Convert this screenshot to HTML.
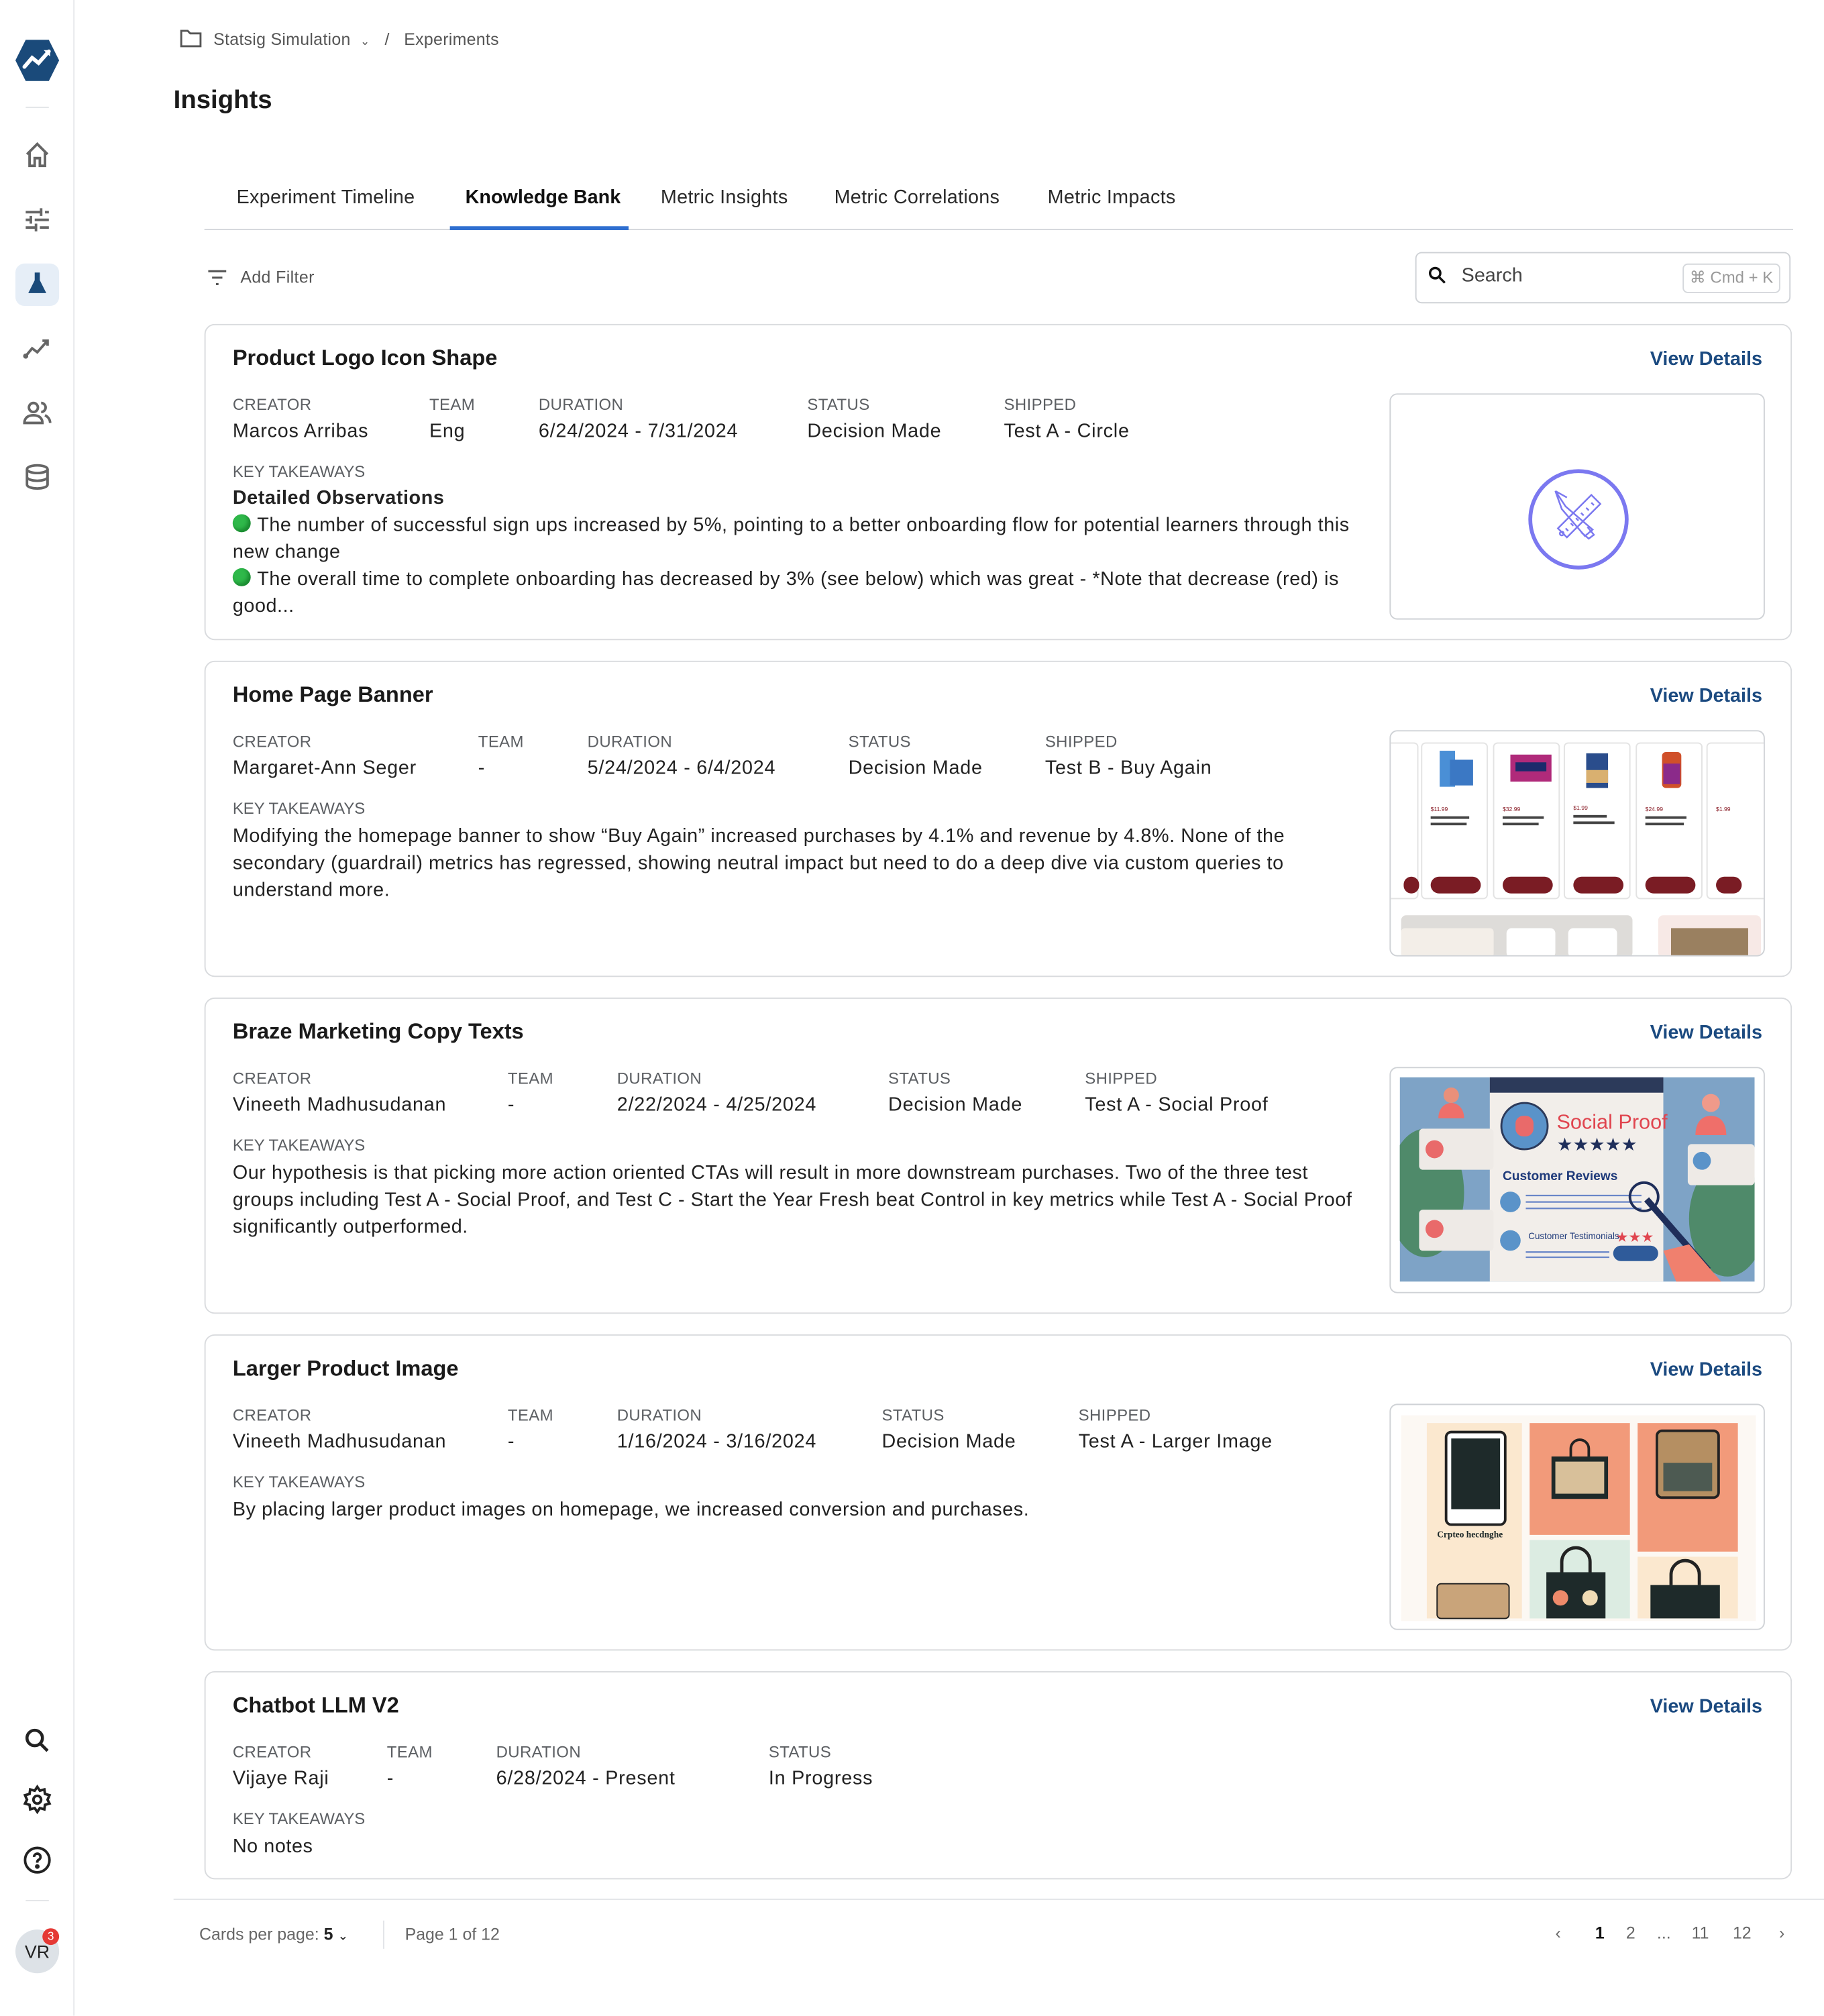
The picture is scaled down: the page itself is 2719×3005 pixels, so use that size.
<!DOCTYPE html>
<html><head><meta charset="utf-8">
<style>
*{box-sizing:border-box;margin:0;padding:0}
html,body{width:2719px;height:3004px;overflow:hidden;background:#fff}
#r{position:absolute;left:0;top:0;width:1419px;height:1568px;transform:scale(1.91614);transform-origin:0 0;font-family:"Liberation Sans",sans-serif;color:#1f1f1f}
.a{position:absolute}
.side{left:0;top:0;width:58px;height:1568px;border-right:1px solid #e6e8eb}
.ic{position:absolute;left:17px;width:24px;height:24px}
.card{position:absolute;left:159px;width:1235px;border:1px solid #d9dbde;border-radius:8px;background:#fff}
.t{position:absolute;left:21px;top:16px;font-size:17px;font-weight:bold;color:#1a1a1a}
.vd{position:absolute;right:22px;top:18px;font-size:15px;font-weight:bold;color:#1b4a80}
.lb{position:absolute;top:55px;font-size:12.5px;color:#5c5f63;letter-spacing:.2px}
.vl{position:absolute;top:74px;font-size:15px;color:#222;letter-spacing:.4px}
.kt{position:absolute;left:21px;top:107px;font-size:12.5px;color:#5c5f63}
.tx{position:absolute;left:21px;top:125px;width:875px;font-size:15px;line-height:21px;color:#222;letter-spacing:.3px}
.img{position:absolute;left:921px;top:53px;width:292px;height:176px;border:1px solid #cfd2d6;border-radius:6px;overflow:hidden;background:#fff}
.dot{display:inline-block;width:14px;height:14px;border-radius:50%;background:#2fb84a;vertical-align:-1px;margin-right:5px;box-shadow:inset -2px -2px 3px #1a8a30}
.tab{position:absolute;top:145px;font-size:15px;color:#2a2a2a;letter-spacing:.15px}
</style></head><body><div id="r">

<div class="a side">
 <svg class="a" style="left:11px;top:30px" width="36" height="34" viewBox="0 0 36 34"><polygon points="9,1 27,1 35,17 27,33 9,33 1,17" fill="#1a4a7a"/><path d="M8 22 L14 15 L19 19 L27 10" stroke="#fff" stroke-width="3" fill="none" stroke-linecap="round"/><path d="M23 9 L28 9 L28 14Z" fill="#fff"/></svg>
 <div class="a" style="left:20px;top:83px;width:18px;height:1px;background:#e3e5e8"></div>
 <svg class="ic" style="top:109px" viewBox="0 0 24 24" fill="none" stroke="#666" stroke-width="2"><path d="M4 11 L12 3 L20 11 M6 9 V20 H10 V14 H14 V20 H18 V9"/></svg>
 <svg class="ic" style="top:159px" viewBox="0 0 24 24" fill="none" stroke="#666" stroke-width="2"><path d="M3 6h12M18 6h3M15 3v6M3 12h4M10 12h11M7 9v6M3 18h8M14 18h7M11 15v6"/></svg>
 <div class="a" style="left:12px;top:205px;width:34px;height:33px;border-radius:7px;background:#e6eef7"></div>
 <svg class="ic" style="top:209px" viewBox="0 0 24 24"><path d="M10 3h4v6l5 10H5l5-10z" fill="#1a4a7a"/></svg>
 <svg class="ic" style="top:259px" viewBox="0 0 24 24" fill="none" stroke="#666" stroke-width="2"><path d="M3 18l5-6 4 3 8-9M16 6h4v4"/><circle cx="3" cy="18" r="1"/></svg>
 <svg class="ic" style="top:309px" viewBox="0 0 24 24" fill="none" stroke="#666" stroke-width="2"><circle cx="9" cy="8" r="3.5"/><path d="M2 20c0-4 3-6 7-6s7 2 7 6z"/><path d="M15 4.5a3.5 3.5 0 0 1 0 7M18 14c2 1 4 3 4 6"/></svg>
 <svg class="ic" style="top:359px" viewBox="0 0 24 24" fill="none" stroke="#666" stroke-width="2"><ellipse cx="12" cy="6" rx="8" ry="3"/><path d="M4 6v12c0 1.7 3.6 3 8 3s8-1.3 8-3V6M4 12c0 1.7 3.6 3 8 3s8-1.3 8-3"/></svg>
 <svg class="ic" style="top:1342px" viewBox="0 0 24 24" fill="none" stroke="#222" stroke-width="2.4"><circle cx="10" cy="10" r="6"/><path d="M14.5 14.5L20 20"/></svg>
 <svg class="ic" style="top:1388px" viewBox="0 0 24 24" fill="none" stroke="#222" stroke-width="2"><circle cx="12" cy="12" r="3"/><path d="M12 2l2 3 3.5-1 .5 3.5 3.5 1-1.5 3.5 1.5 3-3.5 1-.5 3.5-3.5-1-2 3-2-3-3.5 1-.5-3.5-3.5-1L4 12 2.5 8.5 6 7.5 6.5 4 10 5z"/></svg>
 <svg class="ic" style="top:1435px" viewBox="0 0 24 24" fill="none" stroke="#222" stroke-width="2"><circle cx="12" cy="12" r="9.5"/><path d="M9.5 9.5a2.5 2.5 0 1 1 3.5 2.3c-.7.4-1 1-1 1.7V14"/><circle cx="12" cy="17" r=".8" fill="#222"/></svg>
 <div class="a" style="left:20px;top:1478px;width:18px;height:1px;background:#e3e5e8"></div>
 <div class="a" style="left:12px;top:1501px;width:34px;height:34px;border-radius:50%;background:#dde2e7;font-size:14px;color:#222;text-align:center;line-height:34px">VR</div>
 <div class="a" style="left:33px;top:1500px;width:13px;height:13px;border-radius:50%;background:#e53935;color:#fff;font-size:9px;text-align:center;line-height:13px">3</div>
</div>

<svg class="a" style="left:140px;top:23px" width="17" height="14" viewBox="0 0 17 14" fill="none" stroke="#555" stroke-width="1.5"><path d="M1 1h5l2 2h8v10H1z"/></svg>
<div class="a" style="left:166px;top:23px;font-size:13px;color:#555;letter-spacing:.15px">Statsig Simulation &nbsp;<span style="font-size:9px">&#8964;</span> &nbsp; / &nbsp; Experiments</div>
<div class="a" style="left:135px;top:67px;font-size:20px;font-weight:bold;color:#1a1a1a">Insights</div>

<div class="tab" style="left:184px">Experiment Timeline</div>
<div class="tab" style="left:362px;font-weight:bold;color:#111;letter-spacing:0">Knowledge Bank</div>
<div class="tab" style="left:514px">Metric Insights</div>
<div class="tab" style="left:649px">Metric Correlations</div>
<div class="tab" style="left:815px">Metric Impacts</div>
<div class="a" style="left:159px;top:178px;width:1236px;height:1px;background:#d5d8dc"></div>
<div class="a" style="left:350px;top:176px;width:139px;height:3px;background:#2f6fd0"></div>

<svg class="a" style="left:161px;top:209px" width="16" height="14" viewBox="0 0 16 14" stroke="#555" stroke-width="1.6"><path d="M1 2h14M4 7h8M7 12h2"/></svg>
<div class="a" style="left:187px;top:208px;font-size:13px;color:#555;letter-spacing:.2px">Add Filter</div>

<div class="a" style="left:1101px;top:196px;width:292px;height:40px;border:1px solid #cfd2d6;border-radius:5px"></div>
<svg class="a" style="left:1111px;top:207px" width="14" height="14" viewBox="0 0 14 14" fill="none" stroke="#111" stroke-width="1.8"><circle cx="5.5" cy="5.5" r="4"/><path d="M8.5 8.5L13 13"/></svg>
<div class="a" style="left:1137px;top:206px;font-size:15px;color:#444">Search</div>
<div class="a" style="left:1309px;top:205px;width:76px;height:23px;border:1px solid #d5d8dc;border-radius:4px;font-size:12.5px;color:#999;text-align:center;line-height:21px">&#8984; Cmd + K</div>

<!-- card1 -->
<div class="card" style="top:252px;height:246px">
 <div class="t">Product Logo Icon Shape</div><div class="vd">View Details</div>
 <div class="lb" style="left:21px">CREATOR</div><div class="vl" style="left:21px">Marcos Arribas</div>
 <div class="lb" style="left:174px">TEAM</div><div class="vl" style="left:174px">Eng</div>
 <div class="lb" style="left:259px">DURATION</div><div class="vl" style="left:259px">6/24/2024 - 7/31/2024</div>
 <div class="lb" style="left:468px">STATUS</div><div class="vl" style="left:468px">Decision Made</div>
 <div class="lb" style="left:621px">SHIPPED</div><div class="vl" style="left:621px">Test A - Circle</div>
 <div class="kt">KEY TAKEAWAYS</div>
 <div class="tx" style="top:124px"><b>Detailed Observations</b><br><span class="dot"></span>The number of successful sign ups increased by 5%, pointing to a better onboarding flow for potential learners through this new change<br><span class="dot"></span>The overall time to complete onboarding has decreased by 3% (see below) which was great - *Note that decrease (red) is good...</div>
 <div class="img">
  <svg class="a" style="left:106px;top:57px" width="80" height="80" viewBox="0 0 80 80" fill="none" stroke="#7b78f0"><circle cx="40" cy="40" r="37.5" stroke-width="3"/><g stroke-width="1.3"><path d="M24 47l26-26 7 7-26 26z"/><path d="M30 47l2 2M34 43l2 2M38 39l2 2M42 35l2 2M46 31l2 2M50 27l2 2"/><circle cx="27" cy="51" r="1.5"/><path d="M22 18l5 14 18 21 6-5-21-18z"/><path d="M22 18l9 5M42 50l6 5 4-3-5-6"/></g></svg>
 </div>
</div>

<!-- card2 -->
<div class="card" style="top:514px;height:246px">
 <div class="t">Home Page Banner</div><div class="vd">View Details</div>
 <div class="lb" style="left:21px">CREATOR</div><div class="vl" style="left:21px">Margaret-Ann Seger</div>
 <div class="lb" style="left:212px">TEAM</div><div class="vl" style="left:212px">-</div>
 <div class="lb" style="left:297px">DURATION</div><div class="vl" style="left:297px">5/24/2024 - 6/4/2024</div>
 <div class="lb" style="left:500px">STATUS</div><div class="vl" style="left:500px">Decision Made</div>
 <div class="lb" style="left:653px">SHIPPED</div><div class="vl" style="left:653px">Test B - Buy Again</div>
 <div class="kt">KEY TAKEAWAYS</div>
 <div class="tx" style="width:830px">Modifying the homepage banner to show “Buy Again” increased purchases by 4.1% and revenue by 4.8%. None of the secondary (guardrail) metrics has regressed, showing neutral impact but need to do a deep dive via custom queries to understand more.</div>
 <div class="img">
  <svg class="a" style="left:0;top:0" width="292" height="176" viewBox="0 0 292 176">
   <g stroke="#e3e3e3" fill="#fff">
    <rect x="-30" y="9" width="51" height="121" rx="3"/><rect x="24" y="9" width="51" height="121" rx="3"/><rect x="80" y="9" width="51" height="121" rx="3"/><rect x="135" y="9" width="51" height="121" rx="3"/><rect x="191" y="9" width="51" height="121" rx="3"/><rect x="246" y="9" width="51" height="121" rx="3"/>
   </g>
   <rect x="38" y="15" width="12" height="28" fill="#4a8fd6"/><rect x="46" y="22" width="18" height="20" fill="#3b78c4"/>
   <rect x="93" y="18" width="32" height="21" fill="#b02a7a"/><rect x="97" y="24" width="24" height="7" fill="#1c2a6b"/>
   <rect x="152" y="17" width="17" height="27" fill="#2a4d8c"/><rect x="152" y="30" width="17" height="10" fill="#d9b070"/>
   <rect x="211" y="16" width="15" height="28" rx="3" fill="#d0502a"/><rect x="212" y="25" width="13" height="16" fill="#8b2a8a"/>
   <g fill="#7a1c24"><rect x="10" y="113" width="12" height="13" rx="6"/><rect x="31" y="113" width="39" height="13" rx="6.5"/><rect x="87" y="113" width="39" height="13" rx="6.5"/><rect x="142" y="113" width="39" height="13" rx="6.5"/><rect x="198" y="113" width="39" height="13" rx="6.5"/><rect x="253" y="113" width="20" height="13" rx="6.5"/></g>
   <g fill="#8a1e28" font-size="4.5" font-family="Liberation Sans"><text x="31" y="62">$11.99</text><text x="87" y="62">$32.99</text><text x="142" y="61">$1.99</text><text x="198" y="62">$24.99</text><text x="253" y="62">$1.99</text></g>
   <g fill="#444"><rect x="31" y="66" width="30" height="2"/><rect x="31" y="71" width="28" height="2"/><rect x="87" y="66" width="32" height="2"/><rect x="87" y="71" width="28" height="2"/><rect x="142" y="65" width="26" height="2"/><rect x="142" y="70" width="32" height="2"/><rect x="198" y="66" width="32" height="2"/><rect x="198" y="71" width="30" height="2"/></g>
   <rect x="8" y="143" width="180" height="33" rx="4" fill="#dedcd9"/><rect x="8" y="153" width="72" height="23" rx="3" fill="#f3eee8"/><rect x="90" y="153" width="38" height="23" rx="4" fill="#fff"/><rect x="138" y="153" width="38" height="23" rx="4" fill="#fff"/><rect x="208" y="143" width="80" height="33" rx="4" fill="#f7e9e6"/><rect x="218" y="153" width="60" height="23" fill="#9a8060"/>
  </svg>
 </div>
</div>

<!-- card3 -->
<div class="card" style="top:776px;height:246px">
 <div class="t">Braze Marketing Copy Texts</div><div class="vd">View Details</div>
 <div class="lb" style="left:21px">CREATOR</div><div class="vl" style="left:21px">Vineeth Madhusudanan</div>
 <div class="lb" style="left:235px">TEAM</div><div class="vl" style="left:235px">-</div>
 <div class="lb" style="left:320px">DURATION</div><div class="vl" style="left:320px">2/22/2024 - 4/25/2024</div>
 <div class="lb" style="left:531px">STATUS</div><div class="vl" style="left:531px">Decision Made</div>
 <div class="lb" style="left:684px">SHIPPED</div><div class="vl" style="left:684px">Test A - Social Proof</div>
 <div class="kt">KEY TAKEAWAYS</div>
 <div class="tx">Our hypothesis is that picking more action oriented CTAs will result in more downstream purchases. Two of the three test groups including Test A - Social Proof, and Test C - Start the Year Fresh beat Control in key metrics while Test A - Social Proof significantly outperformed.</div>
 <div class="img">
  <svg class="a" style="left:7px;top:7px" width="276" height="159" viewBox="0 0 276 159">
   <rect width="276" height="159" fill="#7ea3c6"/>
   <ellipse cx="20" cy="90" rx="30" ry="50" fill="#4f8a6a"/><ellipse cx="255" cy="110" rx="30" ry="45" fill="#4f8a6a"/>
   <rect x="70" y="0" width="135" height="159" fill="#f2eeea"/><rect x="70" y="0" width="135" height="12" fill="#2c3a5a"/>
   <circle cx="97" cy="38" r="18" fill="#5a93c9" stroke="#2c3a5a" stroke-width="1.5"/><rect x="90" y="30" width="14" height="16" rx="6" fill="#e96a6a"/>
   <text x="122" y="40" font-size="16" fill="#e0454f" font-family="Liberation Sans">Social Proof</text>
   <text x="122" y="57" font-size="14" fill="#1f2e5a" font-family="DejaVu Sans">★★★★★</text>
   <text x="80" y="80" font-size="10" fill="#1f3a7a" font-family="Liberation Sans" font-weight="bold">Customer Reviews</text>
   <g stroke="#6a86c8" stroke-width="1.2"><path d="M98 92h90M98 97h90M98 102h90M98 136h65M98 140h65"/></g>
   <circle cx="86" cy="97" r="8" fill="#5a93c9"/><circle cx="86" cy="127" r="8" fill="#5a93c9"/>
   <text x="100" y="126" font-size="7" fill="#1f3a7a" font-family="Liberation Sans">Customer Testimonials</text>
   <text x="168" y="128" font-size="11" fill="#e0454f" font-family="DejaVu Sans">★★★</text>
   <rect x="166" y="131" width="35" height="12" rx="6" fill="#2f5b9a"/>
   <circle cx="190" cy="93" r="11" fill="none" stroke="#1f2e5a" stroke-width="2"/><path d="M192 95 L240 150" stroke="#1f2e5a" stroke-width="5"/><path d="M205 135 l20 -5 25 29 h-35z" fill="#f0806e"/>
   <rect x="15" y="40" width="58" height="32" rx="3" fill="#eeeae6"/><rect x="15" y="103" width="58" height="32" rx="3" fill="#eeeae6"/><rect x="224" y="52" width="52" height="32" rx="3" fill="#eeeae6"/>
   <circle cx="27" cy="56" r="7" fill="#e96a6a"/><circle cx="27" cy="118" r="7" fill="#e96a6a"/><circle cx="235" cy="65" r="7" fill="#5a93c9"/>
   <path d="M30 32c0-8 5-12 10-12s10 4 10 12z" fill="#ef6f6a"/><circle cx="40" cy="14" r="6" fill="#e9907a"/>
   <path d="M230 45c0-10 5-15 12-15s12 5 12 15z" fill="#ef6f6a"/><circle cx="242" cy="20" r="7" fill="#f09a8a"/>
  </svg>
 </div>
</div>

<!-- card4 -->
<div class="card" style="top:1038px;height:246px">
 <div class="t">Larger Product Image</div><div class="vd">View Details</div>
 <div class="lb" style="left:21px">CREATOR</div><div class="vl" style="left:21px">Vineeth Madhusudanan</div>
 <div class="lb" style="left:235px">TEAM</div><div class="vl" style="left:235px">-</div>
 <div class="lb" style="left:320px">DURATION</div><div class="vl" style="left:320px">1/16/2024 - 3/16/2024</div>
 <div class="lb" style="left:526px">STATUS</div><div class="vl" style="left:526px">Decision Made</div>
 <div class="lb" style="left:679px">SHIPPED</div><div class="vl" style="left:679px">Test A - Larger Image</div>
 <div class="kt">KEY TAKEAWAYS</div>
 <div class="tx">By placing larger product images on homepage, we increased conversion and purchases.</div>
 <div class="img">
  <svg class="a" style="left:0;top:0" width="292" height="176" viewBox="0 0 292 176">
   <rect x="8" y="8" width="276" height="160" fill="#fcf8f3"/>
   <rect x="28" y="14" width="74" height="152" fill="#fbe8cf"/>
   <rect x="108" y="14" width="78" height="87" fill="#f29a7a"/><rect x="108" y="105" width="78" height="61" fill="#dcece2"/>
   <rect x="192" y="14" width="78" height="100" fill="#f29a7a"/><rect x="192" y="118" width="78" height="48" fill="#fbe8cf"/>
   <rect x="43" y="21" width="46" height="72" rx="4" fill="#fff" stroke="#222" stroke-width="2"/><rect x="47" y="26" width="38" height="55" fill="#1e2a2a"/>
   <text x="36" y="103" font-size="7" font-weight="bold" fill="#1e2a2a" font-family="Liberation Serif">Crpteo hecdnghe</text>
   <rect x="36" y="139" width="56" height="27" rx="3" fill="#c9a47a" stroke="#222"/>
   <path d="M125 40h44v33h-44z" fill="#1e2a2a"/><path d="M128 44h38v25h-38z" fill="#d8c09a"/><path d="M140 40v-6a7 7 0 0 1 14 0v6" fill="none" stroke="#222" stroke-width="2"/>
   <rect x="207" y="20" width="48" height="52" rx="4" fill="#b58f62" stroke="#222" stroke-width="2"/><rect x="212" y="45" width="38" height="22" fill="#4d5a52"/>
   <path d="M121 130h46v36h-46z" fill="#1e2a2a"/><path d="M133 130v-8a11 11 0 0 1 22 0v8" fill="none" stroke="#222" stroke-width="2.5"/><circle cx="132" cy="150" r="6" fill="#ee8a6a"/><circle cx="155" cy="150" r="6" fill="#f1dcb5"/>
   <path d="M202 140h54v26h-54z" fill="#1e2a2a"/><path d="M218 140v-8a11 11 0 0 1 22 0v8" fill="none" stroke="#222" stroke-width="2.5"/>
  </svg>
 </div>
</div>

<!-- card5 -->
<div class="card" style="top:1300px;height:162px">
 <div class="t">Chatbot LLM V2</div><div class="vd">View Details</div>
 <div class="lb" style="left:21px">CREATOR</div><div class="vl" style="left:21px">Vijaye Raji</div>
 <div class="lb" style="left:141px">TEAM</div><div class="vl" style="left:141px">-</div>
 <div class="lb" style="left:226px">DURATION</div><div class="vl" style="left:226px">6/28/2024 - Present</div>
 <div class="lb" style="left:438px">STATUS</div><div class="vl" style="left:438px">In Progress</div>
 <div class="kt">KEY TAKEAWAYS</div>
 <div class="tx">No notes</div>
</div>

<div class="a" style="left:135px;top:1477px;width:1284px;height:1px;background:#e3e5e8"></div>
<div class="a" style="left:155px;top:1497px;font-size:13px;color:#666">Cards per page: <b style="color:#222">5</b> <span style="font-size:10px;color:#222">&#8964;</span></div>
<div class="a" style="left:298px;top:1494px;width:1px;height:22px;background:#e3e5e8"></div>
<div class="a" style="left:315px;top:1497px;font-size:13px;color:#666">Page 1 of 12</div>
<div class="a" style="left:1210px;top:1496px;font-size:13px;color:#666;word-spacing:0">
 <span style="position:absolute;left:0">&#8249;</span><span style="position:absolute;left:31px;color:#111;font-weight:bold">1</span><span style="position:absolute;left:55px">2</span><span style="position:absolute;left:79px">...</span><span style="position:absolute;left:106px">11</span><span style="position:absolute;left:138px">12</span><span style="position:absolute;left:174px">&#8250;</span>
</div>
</div></body></html>
